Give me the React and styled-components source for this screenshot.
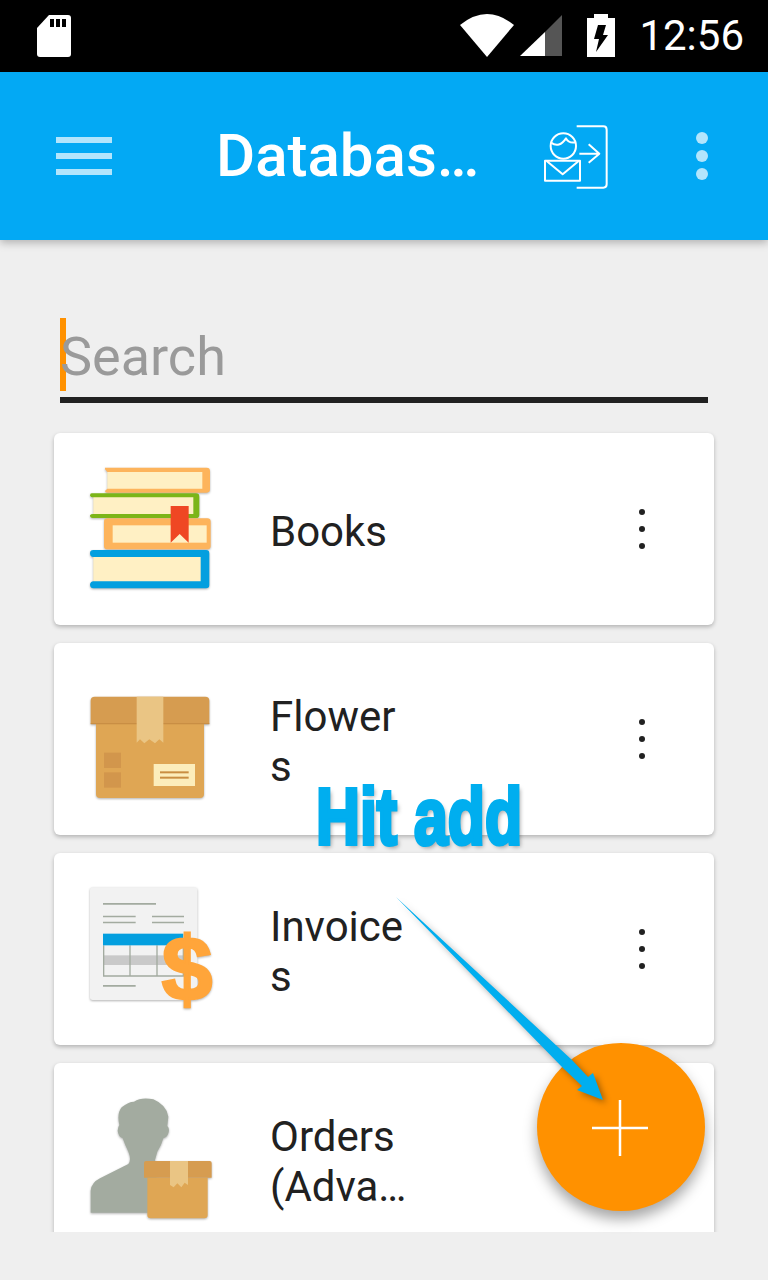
import React from 'react';
import styled, { createGlobalStyle } from 'styled-components';

const GlobalStyle = createGlobalStyle`
  html, body {
    margin: 0;
    padding: 0;
    background: #efefef;
    font-family: Roboto, "Liberation Sans", sans-serif;
  }
`;

const items = [
  { name: 'Books', icon: <BooksIcon /> },
  { name: 'Flowers', icon: <BoxIcon /> },
  { name: 'Invoices', icon: <InvoiceIcon /> },
  { name: 'Orders (Adva…', icon: <OrdersIcon /> },
];

const App = () => {
  return (
    <Page>
      <GlobalStyle />
      <StatusBar>
        <SdCard />
        <StatusRight>
          <Wifi />
          <Signal />
          <Battery />
          <Clock>12:56</Clock>
        </StatusRight>
      </StatusBar>
      <AppBar>
        <Hamburger>
          <span />
          <span />
          <span />
        </Hamburger>
        <Title>Databas…</Title>
        <LoginIcon />
        <Dots $size={12} $gap={6} $color="#b3e5fc">
          <span />
          <span />
          <span />
        </Dots>
      </AppBar>
      <Main>
        <SearchBox>
          <Cursor />
          <SearchText>Search</SearchText>
        </SearchBox>
        <List>
          {items.map(item => (
            <Card key={item.name}>
              <IconSlot>{item.icon}</IconSlot>
              <Name>{item.name}</Name>
              <CardMenu>
                <Dots $size={6} $gap={11} $color="#212121">
                  <span />
                  <span />
                  <span />
                </Dots>
              </CardMenu>
            </Card>
          ))}
        </List>
      </Main>
      <Fab>
        <PlusIcon />
      </Fab>
      <HitAdd>Hit add</HitAdd>
      <Arrow />
    </Page>
  );
};

export default App;

function SdCard() {
  return (
    <svg width="34" height="42" viewBox="0 0 34 42">
      <path d="M12 0H31Q34 0 34 3V39Q34 42 31 42H3Q0 42 0 39V13Z" fill="#fff" />
      <path d="M13 4h4v8h-4zM19 4h4v8h-4zM25 4h4v8h-4z" fill="#000" />
    </svg>
  );
}

function Wifi() {
  return (
    <svg width="54" height="44" viewBox="0 0 54 44">
      <path d="M0 11Q27 -11 54 11L27 43Z" fill="#fff" />
    </svg>
  );
}

function Signal() {
  return (
    <svg width="42" height="42" viewBox="0 0 42 42">
      <path d="M0 41L25 17V41Z" fill="#fff" />
      <path d="M25 17L42 0V41H25Z" fill="#555" />
    </svg>
  );
}

function Battery() {
  return (
    <svg width="28" height="44" viewBox="0 0 28 44">
      <path d="M7 0H21V4H28V43H0V4H7Z" fill="#fff" />
      <path d="M11 11H19L16 21H21L9 38L12 25H7Z" fill="#000" />
    </svg>
  );
}

function LoginIcon() {
  return (
    <LoginSvg width="110" height="90" viewBox="0 0 330 270" fill="none" stroke="#fff" strokeWidth="6" strokeLinejoin="round">
      <circle cx="130" cy="105" r="38" />
      <path d="M93 95Q118 112 138 82Q146 98 167 94" />
      <rect x="75" y="149" width="105" height="60" />
      <path d="M80 150L128 190L176 150" />
      <path d="M178 128H238M206 100L238 128L206 155" />
      <path d="M170 46H250Q260 46 260 56V220Q260 230 250 230H170" />
    </LoginSvg>
  );
}

function BooksIcon() {
  return (
    <IconSvg viewBox="90 87 420 420">
      <rect x="172" y="120" width="290" height="60" fill="#fff0c4" />
      <path d="M165 113H470Q480 113 480 123V178Q480 188 470 188H172Q165 188 165 183L172 176H457V126H172L165 118Z" fill="#fdb45c" />
      <rect x="130" y="197" width="305" height="60" fill="#fff0c4" />
      <path d="M125 190H438Q448 190 448 200V254Q448 264 438 264H128Q120 264 120 256Q122 252 130 252H430V202H130Q122 202 120 197Q120 190 125 190Z" fill="#7cb518" />
      <rect x="162" y="265" width="320" height="93" rx="10" fill="#fdb45c" />
      <rect x="188" y="286" width="282" height="52" fill="#fff0c4" />
      <rect x="130" y="375" width="330" height="85" fill="#fff0c4" />
      <path d="M130 360H468Q478 360 478 370V465Q478 475 468 475H130Q120 475 120 463Q122 454 130 454H452V381H130Q120 381 120 370Q120 360 130 360Z" fill="#039fdf" />
      <path d="M362 228H416V338L389 312L362 338Z" fill="#ef4723" />
    </IconSvg>
  );
}

function BoxIcon() {
  return (
    <IconSvg viewBox="90 -3 420 420">
      <path d="M138 162H462V372Q462 384 450 384H150Q138 384 138 372Z" fill="#dfa654" />
      <path d="M122 162V92Q122 80 134 80H466Q478 80 478 92V162Z" fill="#d69c50" />
      <path d="M122 160H478V163H122Z" fill="#c48a40" />
      <path d="M260 80H340V218L328 208L315 220L298 208L283 220L270 208L260 218Z" fill="#eac584" />
      <rect x="162" y="248" width="51" height="46" fill="#d2964c" />
      <rect x="162" y="307" width="51" height="46" fill="#d2964c" />
      <rect x="311" y="282" width="124" height="66" fill="#fcedbb" />
      <rect x="330" y="304" width="86" height="6" fill="#c98e42" />
      <rect x="330" y="320" width="86" height="6" fill="#c98e42" />
    </IconSvg>
  );
}

function InvoiceIcon() {
  return (
    <IconSvg viewBox="90 27 420 420">
      <rect x="120" y="52" width="322" height="338" rx="8" fill="#f2f2f2" />
      <path d="M159 99H318V104H159ZM159 137H257V142H159ZM159 155H257V160H159ZM306 137H402V142H306ZM306 155H402V160H306ZM159 345H257V350H159Z" fill="#a3aba0" />
      <rect x="161" y="256" width="238" height="29" fill="#c9c9c9" />
      <path d="M161 226V318H400V226M240 226V318M321 226V318" fill="none" stroke="#a3aba0" strokeWidth="4" />
      <rect x="159" y="191" width="241" height="35" fill="#039fdf" />
      <DollarText x="411" y="389">$</DollarText>
    </IconSvg>
  );
}

function OrdersIcon() {
  return (
    <IconSvg viewBox="90 57 420 420">
      <path
        d="M122 428V362Q124 338 150 325L235 282Q245 270 235 245Q225 225 218 205Q205 200 203 182Q204 170 208 165Q200 130 215 112Q235 95 252 95Q275 80 310 88Q350 105 355 140L352 168Q360 175 355 190Q352 202 340 205Q335 225 322 245L315 270L320 290V428Z"
        fill="#a3aba0"
      />
      <path d="M292 323H473V435Q473 445 463 445H302Q292 445 292 435Z" fill="#dfa654" />
      <path d="M282 323V279Q282 273 288 273H479Q485 273 485 279V323Z" fill="#d69c50" />
      <path d="M360 273H414V345L404 338L394 352L382 340L371 352L360 345Z" fill="#eac584" />
    </IconSvg>
  );
}

function PlusIcon() {
  return (
    <PlusSvg width="56" height="56" viewBox="0 0 56 56">
      <path d="M0 28H56M28 0V56" stroke="#fff" strokeWidth="2.5" />
    </PlusSvg>
  );
}

function Arrow() {
  return (
    <ArrowSvg width="230" height="230" viewBox="390 890 230 230">
      <path d="M396 897L572 1060L588 1077L593 1073L603 1100L577 1090L582 1086L563 1068Z" fill="#00aeef" />
    </ArrowSvg>
  );
}

const Dots = styled.div`
  flex: none;
  display: flex;
  flex-direction: column;
  gap: ${props => props.$gap}px;

  span {
    display: block;
    width: ${props => props.$size}px;
    height: ${props => props.$size}px;
    border-radius: 50%;
    background: ${props => props.$color};
  }
`;

const Page = styled.div`
  position: relative;
  width: 768px;
  height: 1280px;
  overflow: hidden;
  background: #efefef;
`;

const StatusBar = styled.div`
  height: 72px;
  box-sizing: border-box;
  padding: 0 24px 0 37px;
  background: #000;
  display: flex;
  align-items: center;
  justify-content: space-between;
`;

const StatusRight = styled.div`
  display: flex;
  align-items: center;
  gap: 6px;

  svg:nth-child(3) {
    margin-left: 19px;
  }
`;

const Clock = styled.div`
  margin-left: 18px;
  font-size: 42px;
  line-height: 48px;
  color: #fff;
`;

const AppBar = styled.div`
  position: relative;
  z-index: 1;
  height: 168px;
  box-sizing: border-box;
  padding: 0 60px 0 56px;
  background: #03a9f4;
  box-shadow: 0 3px 8px rgba(0, 0, 0, 0.25);
  display: flex;
  align-items: center;
`;

const Hamburger = styled.div`
  width: 56px;
  display: flex;
  flex-direction: column;
  gap: 10px;

  span {
    display: block;
    height: 6px;
    background: #b3e5fc;
  }
`;

const Title = styled.div`
  width: 304px;
  margin-left: 104px;
  font-size: 60px;
  font-weight: 500;
  line-height: 64px;
  color: #fff;
  white-space: nowrap;
`;

const LoginSvg = styled.svg`
  margin-right: 66px;
  flex: none;
`;

const Main = styled.div`
  height: 992px;
  box-sizing: border-box;
  padding-top: 78px;
  overflow: hidden;
`;

const SearchBox = styled.div`
  width: 648px;
  height: 85px;
  margin-left: 60px;
  box-sizing: border-box;
  border-bottom: 6px solid #212121;
  display: flex;
  align-items: flex-start;
`;

const Cursor = styled.span`
  width: 6px;
  height: 73px;
  background: #ff9100;
`;

const SearchText = styled.span`
  margin-left: -6px;
  padding-top: 8px;
  font-size: 54px;
  line-height: 62px;
  color: #9a9a9a;
`;

const List = styled.div`
  margin: 30px 54px 0;
  display: flex;
  flex-direction: column;
  gap: 18px;
`;

const Card = styled.div`
  flex: none;
  height: 192px;
  box-sizing: border-box;
  padding-left: 26px;
  background: #fff;
  border-radius: 6px;
  box-shadow: 0 2px 4px rgba(0, 0, 0, 0.25);
  display: flex;
  align-items: center;
`;

const IconSlot = styled.div`
  width: 140px;
  height: 140px;
  flex: none;
`;

const IconSvg = styled.svg`
  display: block;
  width: 140px;
  height: 140px;
  filter: drop-shadow(0 1px 1px rgba(0, 0, 0, 0.3));
`;

const DollarText = styled.text`
  font-family: "Liberation Sans", sans-serif;
  font-size: 275px;
  font-weight: 700;
  text-anchor: middle;
  fill: #ffa53a;
  stroke: #ffa53a;
  stroke-width: 7px;
`;

const Name = styled.div`
  width: 140px;
  margin-left: 50px;
  padding-top: 6px;
  font-size: 42px;
  line-height: 50px;
  color: #212121;
  overflow-wrap: anywhere;
`;

const CardMenu = styled.div`
  margin-left: auto;
  margin-right: 69px;
  display: flex;
`;

const Fab = styled.div`
  position: absolute;
  left: 537px;
  top: 1043px;
  width: 168px;
  height: 168px;
  border-radius: 50%;
  background: #ff9100;
  box-shadow: 0 8px 14px rgba(0, 0, 0, 0.35);
  display: flex;
  align-items: center;
  justify-content: center;
`;

const PlusSvg = styled.svg`
  margin-top: 1px;
  margin-left: -2px;
`;

const HitAdd = styled.div`
  position: absolute;
  left: 316px;
  top: 771px;
  font-family: "Liberation Sans", sans-serif;
  font-size: 80px;
  font-weight: 700;
  line-height: 92px;
  color: #00aeef;
  -webkit-text-stroke: 4px #00aeef;
  text-shadow: 3px 3px 5px rgba(0, 0, 0, 0.35);
  white-space: nowrap;
  transform: scaleX(0.76);
  transform-origin: left center;
`;

const ArrowSvg = styled.svg`
  position: absolute;
  left: 390px;
  top: 890px;
  filter: drop-shadow(3px 3px 3px rgba(0, 0, 0, 0.35));
`;
